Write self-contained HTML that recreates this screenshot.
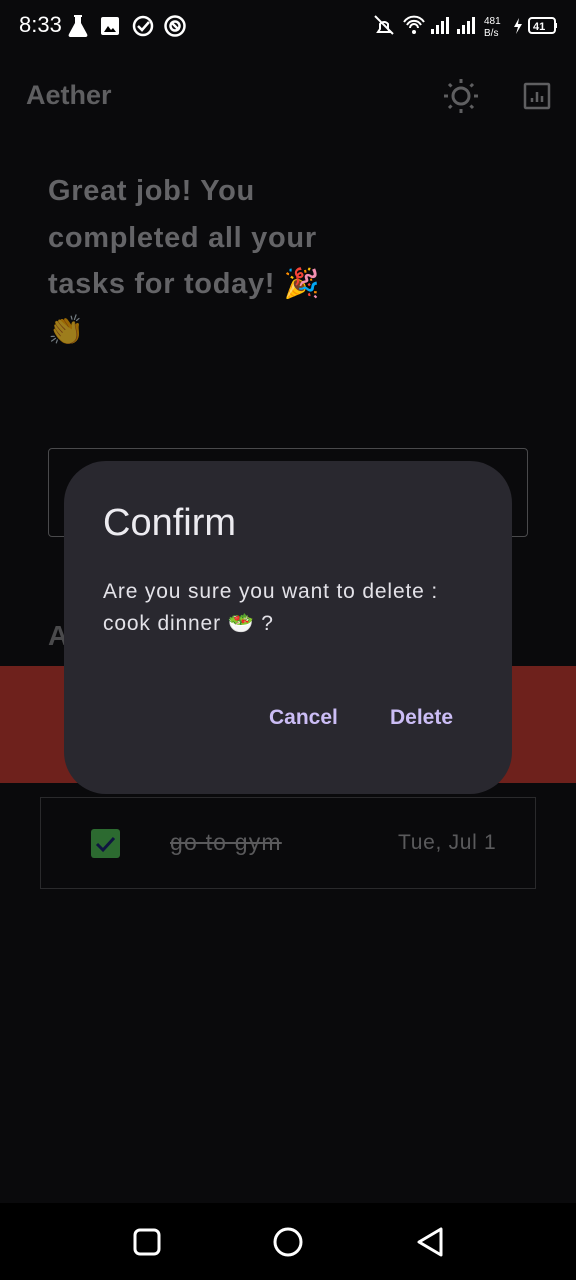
<!DOCTYPE html>
<html><head><meta charset="utf-8"><style>
*{margin:0;padding:0;box-sizing:border-box}
body{width:576px;height:1280px;background:#0a0a0c;font-family:"Liberation Sans","Noto Sans CJK SC",sans-serif;position:relative;overflow:hidden;color:#fff}
.abs{position:absolute}
</style></head><body>
<!-- status bar -->
<div class="abs" style="left:19px;top:12px;font-size:22px;color:#fff;font-weight:500">8:33</div>
<svg class="abs" style="left:68px;top:13px" width="124" height="26" viewBox="0 0 124 26" fill="#fff">
<path d="M6 2h8v2h-1v6l6 11c1 2 0 3-2 3H3c-2 0-3-1-2-3l6-11V4H6z"/>
<rect x="33" y="4" width="18" height="18" rx="2"/><path d="M36 19l4-6 3 4 2-2 3 4z" fill="#000"/>
<circle cx="75" cy="13" r="9" fill="none" stroke="#fff" stroke-width="2.5"/><path d="M70 13l4 4 7-8" fill="none" stroke="#fff" stroke-width="2.5"/>
<circle cx="107" cy="13" r="9.5" fill="none" stroke="#fff" stroke-width="2.5"/><circle cx="107" cy="13" r="4.5" fill="none" stroke="#fff" stroke-width="2.5"/><path d="M103 9l8 8" stroke="#fff" stroke-width="2.5"/>
</svg>
<svg class="abs" style="left:372px;top:12px" width="190" height="28" viewBox="0 0 190 28" fill="#fff">
<path d="M6 20h12l-2-3v-5a5 5 0 0 0-8 0v5z" fill="none" stroke="#fff" stroke-width="2"/><path d="M3 4l18 18" stroke="#fff" stroke-width="2"/>
<path d="M32 10a12 12 0 0 1 20 0M35 13a8 8 0 0 1 14 0M38 16a4 4 0 0 1 8 0" fill="none" stroke="#fff" stroke-width="2"/><circle cx="42" cy="20" r="2"/>
<rect x="59" y="17" width="3" height="5"/><rect x="64" y="13" width="3" height="9"/><rect x="69" y="9" width="3" height="13"/><rect x="74" y="5" width="3" height="17"/>
<rect x="85" y="17" width="3" height="5"/><rect x="90" y="13" width="3" height="9"/><rect x="95" y="9" width="3" height="13"/><rect x="100" y="5" width="3" height="17"/>
<text x="112" y="12" font-size="10" font-family="Liberation Sans">481</text><text x="112" y="24" font-size="10" font-family="Liberation Sans">B/s</text>
<path d="M147 6l-5 9h4l-2 7 6-10h-4z"/>
<rect x="157" y="6" width="26" height="15" rx="3" fill="none" stroke="#fff" stroke-width="2"/><rect x="183" y="11" width="2" height="5"/>
<text x="161" y="18" font-size="11" font-weight="bold" font-family="Liberation Sans">41</text>
</svg>
<!-- app bar -->
<div class="abs" style="left:26px;top:80px;font-size:27px;font-weight:bold;color:#5f5f61">Aether</div>
<svg class="abs" style="left:441px;top:76px" width="40" height="40" viewBox="0 0 40 40" stroke="#5f5f61" stroke-width="3" fill="none">
<circle cx="20" cy="20" r="8"/><path d="M20 3v4M20 33v4M3 20h4M33 20h4M8 8l2.5 2.5M29.5 29.5L32 32M8 32l2.5-2.5M29.5 10.5L32 8"/>
</svg>
<svg class="abs" style="left:523px;top:82px" width="28" height="28" viewBox="0 0 28 28" fill="none" stroke="#5f5f61" stroke-width="2.5">
<rect x="2" y="2" width="24" height="24" rx="1"/><path d="M9 20v-4M14 20v-10M19 20v-6"/>
</svg>
<!-- headline -->
<div class="abs" style="left:48px;top:168px;width:310px;font-size:29px;letter-spacing:0.7px;font-weight:bold;line-height:46.5px;color:#646467">Great job! You completed all your tasks for today! 🎉<br><span style="opacity:.6">👏</span></div>
<!-- input box -->
<div class="abs" style="left:48px;top:448px;width:480px;height:89px;border:1.5px solid #4a4a4c;border-radius:4px"></div>
<div class="abs" style="left:48px;top:620px;font-size:28px;font-weight:bold;color:#4a4a4c">A</div>
<!-- red band -->
<div class="abs" style="left:0;top:666px;width:576px;height:117px;background:#6e211c"></div>
<!-- task row -->
<div class="abs" style="left:40px;top:797px;width:496px;height:92px;border:1.5px solid #2a2a2c"></div>
<div class="abs" style="left:91px;top:829px;width:29px;height:29px;background:#2c6a30;border-radius:3px"></div>
<svg class="abs" style="left:91px;top:829px" width="29" height="29" viewBox="0 0 29 29"><path d="M6 15l6 6 11-12" stroke="#0f1540" stroke-width="3" fill="none"/></svg>
<div class="abs" style="left:170px;top:829px;font-size:23px;letter-spacing:1.2px;color:#5a5a5c;text-decoration:line-through">go to gym</div>
<div class="abs" style="left:398px;top:831px;font-size:21px;letter-spacing:0.7px;color:#5a5a5c">Tue, Jul 1</div>
<!-- dialog -->
<div class="abs" style="left:64px;top:461px;width:448px;height:333px;background:#29282f;border-radius:42px">
<div class="abs" style="left:39px;top:41px;font-size:38px;color:#ecebf0">Confirm</div>
<div class="abs" style="left:39px;top:115px;font-size:21px;letter-spacing:0.85px;line-height:32px;color:#e3e2e8;white-space:nowrap">Are you sure you want to delete :<br>cook dinner 🥗 ?</div>
<div class="abs" style="left:205px;top:245px;font-size:21px;font-weight:bold;color:#cbbdf5">Cancel</div>
<div class="abs" style="left:326px;top:245px;font-size:21px;font-weight:bold;color:#cbbdf5">Delete</div>
</div>
<!-- nav bar -->
<div class="abs" style="left:0;top:1203px;width:576px;height:77px;background:#000"></div>
<svg class="abs" style="left:0;top:1203px" width="576" height="77" viewBox="0 0 576 77" fill="none" stroke="#fff" stroke-width="3">
<rect x="135" y="27" width="24" height="24" rx="5"/><circle cx="288" cy="39" r="13"/><path d="M441 26v26l-22-13z" stroke-linejoin="round"/>
</svg>
</body></html>
